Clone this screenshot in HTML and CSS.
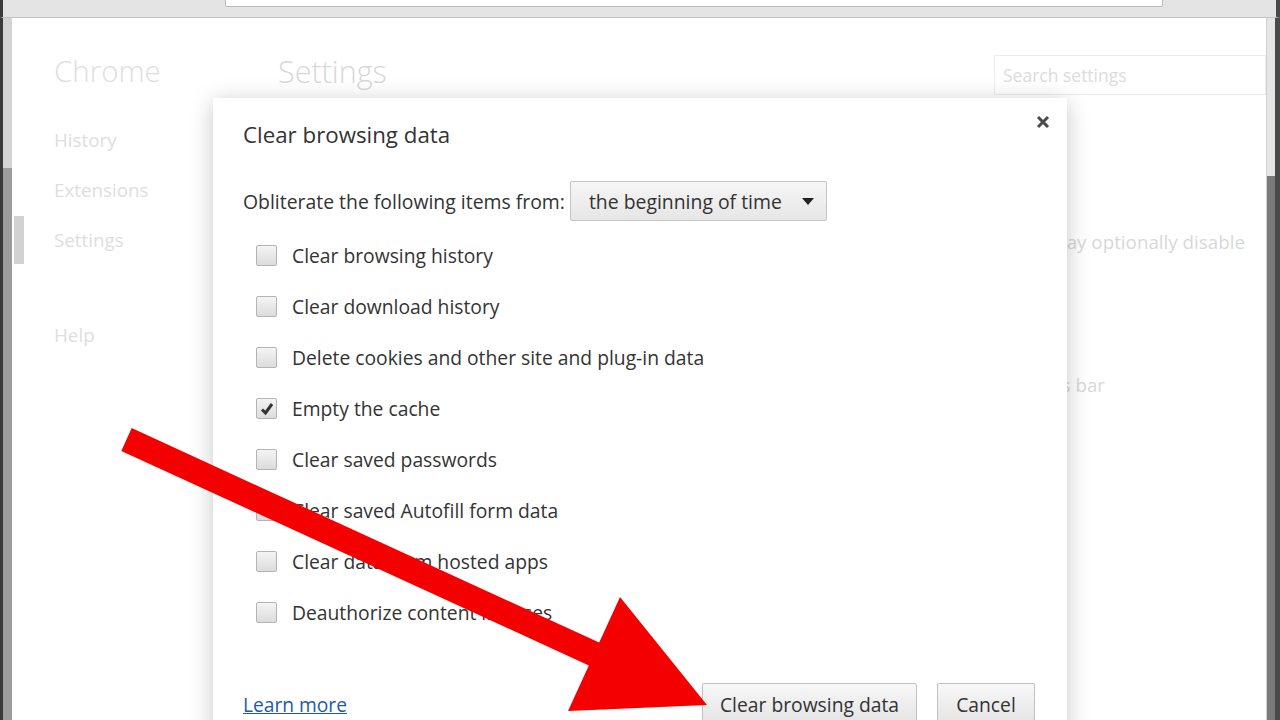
FILE: index.html
```html
<!DOCTYPE html>
<html lang="en">
<head>
    <meta charset="UTF-8">
    <title>Settings - Clear browsing data</title>
    <link rel="stylesheet" href="styles.css">
</head>
<body>
<div class="window">
    <div class="toolbar">
        <div class="tb-left"></div>
        <div class="omnibox"></div>
        <div class="tb-right"></div>
    </div>

    <div class="frame">
        <div class="edge-left"><div class="edge-thumb"></div></div>

        <div class="page">
            <div class="sidebar">
                <div class="brand">Chrome</div>
                <ul class="nav">
                    <li>History</li>
                    <li>Extensions</li>
                    <li class="active">Settings</li>
                    <li class="nav-help">Help</li>
                </ul>
            </div>

            <div class="main">
                <div class="main-head">
                    <h1>Settings</h1>
                    <div class="search">Search settings</div>
                </div>
                <div class="bg-line line-a">You may optionally disable</div>
                <div class="bg-line line-b">Always show the bookmarks bar</div>
            </div>
        </div>

        <div class="edge-right"><div class="scroll-thumb"></div></div>
    </div>

    <!-- modal -->
    <div class="dialog">
        <button class="close" type="button">
            <svg width="14" height="14" viewBox="0 0 14 14"><path d="M2 2 L12 12 M12 2 L2 12" stroke="#4a4a4a" stroke-width="3"/></svg>
        </button>
        <div class="dlg-title">Clear browsing data</div>

        <div class="range">
            <span>Obliterate the following items from:</span>
            <div class="select">
                the beginning of time
                <svg width="12" height="7" viewBox="0 0 12 7"><path d="M0 0 H12 L6 7 Z" fill="#222"/></svg>
            </div>
        </div>

        <ul class="items">
            <li><span class="box"></span>Clear browsing history</li>
            <li><span class="box"></span>Clear download history</li>
            <li><span class="box"></span>Delete cookies and other site and plug-in data</li>
            <li><span class="box checked"><svg width="16" height="16" viewBox="0 0 16 16"><path d="M3 8.5 L6.5 12 L13 3" stroke="#333" stroke-width="3" fill="none"/></svg></span>Empty the cache</li>
            <li><span class="box"></span>Clear saved passwords</li>
            <li><span class="box"></span>Clear saved Autofill form data</li>
            <li><span class="box"></span>Clear data from hosted apps</li>
            <li><span class="box"></span>Deauthorize content licenses</li>
        </ul>

        <div class="footer">
            <a href="#" class="learn">Learn more</a>
            <div class="buttons">
                <button type="button" class="btn btn-main">Clear browsing data</button>
                <button type="button" class="btn">Cancel</button>
            </div>
        </div>
    </div>

    <svg class="arrow" width="1280" height="720" viewBox="0 0 1280 720">
        <polygon points="131.7,428.1 599.2,642.6 620,597 707,705 568,711 588.8,665.4 121.3,450.9" fill="#f50000"/>
    </svg>
</div>
</body>
</html>
```

FILE: styles.css
```css
body {
    margin: 0;
    font-family: "Open Sans", "Noto Sans", sans-serif;
    background-color: #ffffff;
    overflow: hidden;
}

.window {
    position: relative;
    width: 1280px;
    height: 720px;
    display: flex;
    flex-direction: column;
    overflow: hidden;
}

/* browser chrome */
.toolbar {
    height: 17px;
    display: flex;
    background-color: #e4e4e4;
    border-bottom: 1px solid #c4c4c4;
    border-left: 3px solid #3c3c3c;
    border-right: 4px solid #4a4a4a;
}

.tb-left {
    width: 222px;
}

.omnibox {
    width: 936px;
    height: 6px;
    background-color: #ffffff;
    border: 1px solid #b8b8b8;
    border-top: none;
    border-radius: 0 0 2px 2px;
}

.tb-right {
    flex: 1;
}

.frame {
    flex: 1;
    display: flex;
}

.edge-left {
    width: 9px;
    border-left: 3px solid #3a3a3a;
    background-color: #9c9c9c;
    display: flex;
    flex-direction: column;
}

.edge-left .edge-thumb {
    height: 150px;
    background-color: #d4d4d4;
}

.edge-right {
    width: 8px;
    border-left: 1px solid #d0d0d0;
    border-right: 5px solid #4a4a4a;
    background-color: #7a7a7a;
    display: flex;
    flex-direction: column;
}

.edge-right .scroll-thumb {
    height: 158px;
    background-color: #e6e6e6;
}

.page {
    flex: 1;
    display: flex;
    background-color: #ffffff;
}

/* settings page behind the modal */
.sidebar {
    width: 266px;
    color: #dedede;
}

.brand {
    font-size: 29.5px;
    font-weight: 300;
    padding: 33px 0 0 42px;
    line-height: 40px;
}

.nav {
    list-style: none;
    margin: 29px 0 0;
    padding: 0;
    font-size: 18.8px;
}

.nav li {
    height: 50px;
    line-height: 40px;
    padding-left: 42px;
    border-left: 10px solid transparent;
    margin-left: -10px;
}

.nav li.active {
    border-left-color: #d2d2d2;
    margin-left: 2px;
    padding-left: 30px;
    height: 48px;
    line-height: 48px;
    margin-top: -4px;
}

.nav li.nav-help {
    margin-top: 51px;
}

.main {
    flex: 1;
    color: #d8d8d8;
}

.main-head {
    display: flex;
    justify-content: space-between;
    align-items: flex-start;
    padding-top: 33px;
}

.main h1 {
    margin: 0;
    font-size: 30.5px;
    font-weight: 300;
    line-height: 40px;
}

.search {
    width: 262px;
    height: 38px;
    line-height: 38px;
    border: 1px solid #ececec;
    padding-left: 8px;
    margin-top: 4px;
    font-size: 17.5px;
    color: #dcdcdc;
}

.bg-line {
    font-size: 18.8px;
    text-align: right;
}

.line-a {
    margin-top: 134px;
    padding-right: 21px;
}

.line-b {
    margin-top: 117px;
    padding-right: 161px;
}

/* modal */
.dialog {
    position: absolute;
    left: 213px;
    top: 98px;
    width: 792px;
    height: 640px;
    padding: 0 32px 0 30px;
    background-color: #ffffff;
    box-shadow: 0 4px 22px rgba(0, 0, 0, 0.22);
    color: #333333;
}

.close {
    position: absolute;
    top: 17px;
    right: 17px;
    border: none;
    background: none;
    padding: 0;
    width: 14px;
    height: 14px;
    display: flex;
}

.dlg-title {
    font-size: 22.3px;
    line-height: 28px;
    padding-top: 23px;
}

.range {
    display: flex;
    align-items: center;
    margin-top: 32px;
    font-size: 19.4px;
    gap: 5px;
}

.select {
    height: 38px;
    width: 225px;
    padding: 0 12px 0 18px;
    display: flex;
    align-items: center;
    justify-content: space-between;
    border: 1px solid #c6c6c6;
    border-radius: 2px;
    background: linear-gradient(#f6f6f6, #e6e6e6);
    color: #333333;
}

.items {
    list-style: none;
    margin: 9px 0 0;
    padding: 0 0 0 13px;
    font-size: 19.3px;
}

.items li {
    height: 51px;
    display: flex;
    align-items: center;
    gap: 15px;
}

.box {
    width: 19px;
    height: 19px;
    border: 1px solid #b4b4b4;
    border-radius: 2px;
    background: linear-gradient(#f4f4f4, #dcdcdc);
    display: flex;
    align-items: center;
    justify-content: center;
}

.footer {
    display: flex;
    justify-content: space-between;
    align-items: center;
    margin-top: 45px;
}

.learn {
    font-size: 19.2px;
    color: #1c5aa8;
    text-decoration: underline;
}

.buttons {
    display: flex;
    gap: 20px;
}

.btn {
    height: 42px;
    padding: 0 10px;
    font-family: "Open Sans", "Noto Sans", sans-serif;
    font-size: 19.3px;
    color: #333333;
    border: 1px solid #c0c0c0;
    border-radius: 2px;
    background: linear-gradient(#f8f8f8, #e4e4e4);
}

.btn-main {
    width: 215px;
}

.btn:last-child {
    width: 98px;
}

.arrow {
    position: absolute;
    left: 0;
    top: 0;
    pointer-events: none;
}
```
